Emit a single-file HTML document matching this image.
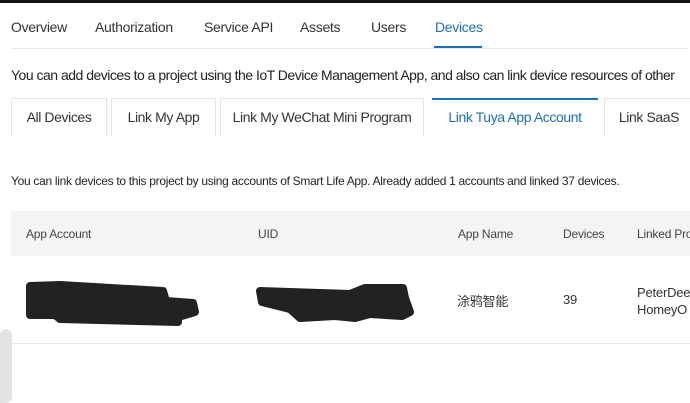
<!DOCTYPE html>
<html><head><meta charset="utf-8"><style>
*{margin:0;padding:0;box-sizing:border-box}
body{width:690px;height:403px;overflow:hidden;background:#fff;font-family:"Liberation Sans","Noto Sans CJK SC",sans-serif;color:#333;position:relative}
.a{position:absolute;white-space:nowrap}
.nav{top:19px;font-size:14px;letter-spacing:-0.3px;color:#333}
.tab{position:absolute;top:98px;height:38px;border:1px solid #e3e3e3;border-bottom:none;font-size:14px;letter-spacing:-0.4px;text-align:center;line-height:37px;color:#333}
.th{top:227px;font-size:12px;letter-spacing:-0.2px;color:#444}
.td{font-size:13px;color:#333;letter-spacing:-0.2px}
</style></head><body>
<div class="a" style="left:0;top:0;width:690px;height:3px;background:#111"></div>
<div class="a nav" style="left:11px">Overview</div>
<div class="a nav" style="left:95px">Authorization</div>
<div class="a nav" style="left:204px">Service API</div>
<div class="a nav" style="left:300px">Assets</div>
<div class="a nav" style="left:371px">Users</div>
<div class="a nav" style="left:435px;color:#1e6fb5">Devices</div>
<div class="a" style="left:11px;top:48px;width:677px;height:1px;background:#e6e6e6"></div>
<div class="a" style="left:434px;top:46px;width:48px;height:2px;background:#1e6fb5"></div>
<div class="a" style="left:11px;top:67px;font-size:14px;letter-spacing:-0.5px;color:#222">You can add devices to a project using the IoT Device Management App, and also can link device resources of other</div>
<div class="tab" style="left:11px;width:96px">All Devices</div>
<div class="tab" style="left:111px;width:105px">Link My App</div>
<div class="tab" style="left:220px;width:204px">Link My WeChat Mini Program</div>
<div class="tab" style="left:432px;width:166px;border:none;border-top:2px solid #1e6fb5;color:#1e6fb5;line-height:35px">Link Tuya App Account</div>
<div class="tab" style="left:604px;width:90px">Link SaaS</div>
<div class="a" style="left:11px;top:174px;font-size:12px;letter-spacing:-0.3px;color:#222">You can link devices to this project by using accounts of Smart Life App. Already added 1 accounts and linked 37 devices.</div>
<div class="a" style="left:11px;top:211px;width:679px;height:45px;background:#f4f4f4"></div>
<div class="a th" style="left:26px">App Account</div>
<div class="a th" style="left:258px">UID</div>
<div class="a th" style="left:458px">App Name</div>
<div class="a th" style="left:563px">Devices</div>
<div class="a th" style="left:637px">Linked Pro</div>
<div class="a" style="left:11px;top:343px;width:679px;height:1px;background:#e8e8e8"></div>
<svg class="a" style="left:0;top:0" width="690" height="403">
<g fill="#222" stroke="#222" stroke-width="8" stroke-linejoin="round">
<path d="M30 286 L60 285 L163 291 L166 301 L193 303 L195 312 L178 317 L178 322 L60 319 L55 315 L30 315 Z"/>
<path d="M260 291 L350 294 L365 288 L403 288 L405 298 L410 312 L402 316 L370 314 L355 318 L335 316 L300 318 L290 309 L262 302 Z"/>
</g>
<rect x="0" y="329" width="12" height="74" rx="6" fill="#e3e3e3"/>
<rect x="0" y="340" width="6" height="63" fill="#e3e3e3"/>
</svg>
<div class="a td" style="left:457px;top:291px">涂鸦智能</div>
<div class="a td" style="left:563px;top:292px">39</div>
<div class="a td" style="left:637px;top:284px;line-height:17px">PeterDee<br>HomeyO</div>
</body></html>
